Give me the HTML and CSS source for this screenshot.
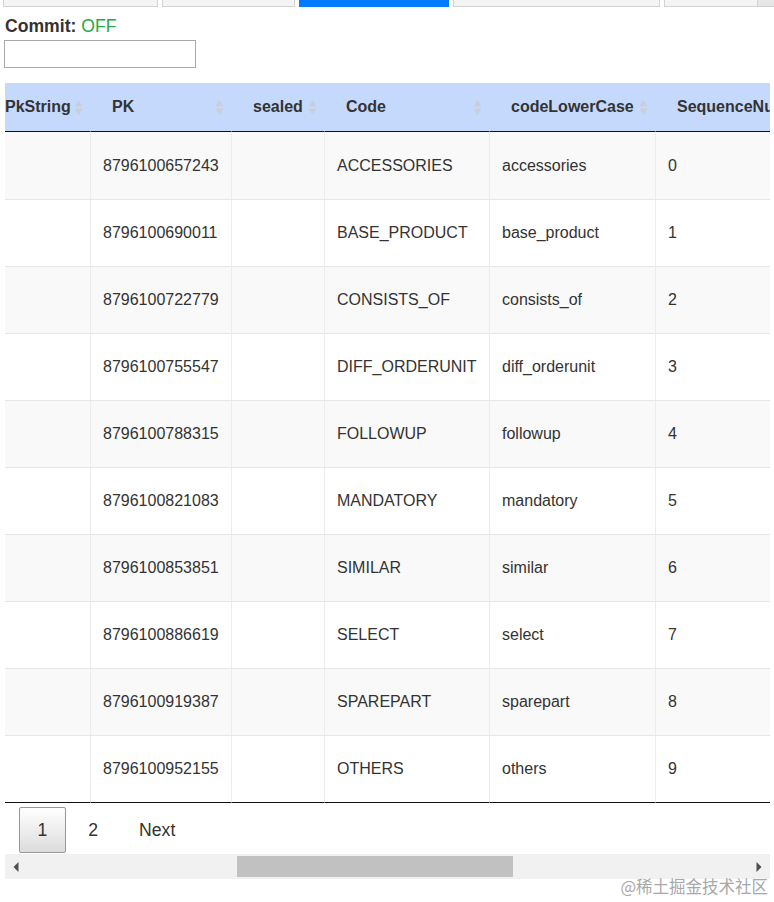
FILE: index.html
```html
<!DOCTYPE html>
<html>
<head>
<meta charset="utf-8">
<link rel="stylesheet" href="styles.css">
</head>
<body>
<div class="tabs">
  <div class="tab t1"></div>
  <div class="tab t2"></div>
  <div class="tab active t3"></div>
  <div class="tab t4"></div>
  <div class="tab t5"></div>
  <div class="tab-end"></div>
</div>
<div class="page">
  <div class="commit"><b>Commit:</b> <span class="off">OFF</span></div>
  <input class="search" type="text">
  <div class="grid">
    <div class="clip">
      <table class="data">
        <thead>
          <tr>
            <th class="c0"><div class="th-in"><span>PkString</span><svg class="sort" width="9" height="17" viewBox="0 0 9 17"><polygon points="0.5,7.5 4.5,1 8.5,7.5"/><polygon points="0.5,9.5 8.5,9.5 4.5,16"/></svg></div></th>
            <th class="c1"><div class="th-in"><span>PK</span><svg class="sort" width="9" height="17" viewBox="0 0 9 17"><polygon points="0.5,7.5 4.5,1 8.5,7.5"/><polygon points="0.5,9.5 8.5,9.5 4.5,16"/></svg></div></th>
            <th class="c2"><div class="th-in"><span>sealed</span><svg class="sort" width="9" height="17" viewBox="0 0 9 17"><polygon points="0.5,7.5 4.5,1 8.5,7.5"/><polygon points="0.5,9.5 8.5,9.5 4.5,16"/></svg></div></th>
            <th class="c3"><div class="th-in"><span>Code</span><svg class="sort" width="9" height="17" viewBox="0 0 9 17"><polygon points="0.5,7.5 4.5,1 8.5,7.5"/><polygon points="0.5,9.5 8.5,9.5 4.5,16"/></svg></div></th>
            <th class="c4"><div class="th-in"><span>codeLowerCase</span><svg class="sort" width="9" height="17" viewBox="0 0 9 17"><polygon points="0.5,7.5 4.5,1 8.5,7.5"/><polygon points="0.5,9.5 8.5,9.5 4.5,16"/></svg></div></th>
            <th class="c5"><div class="th-in"><span>SequenceNu</span></div></th>
          </tr>
        </thead>
        <tbody>
          <tr><td></td><td>8796100657243</td><td></td><td>ACCESSORIES</td><td>accessories</td><td>0</td></tr>
          <tr><td></td><td>8796100690011</td><td></td><td>BASE_PRODUCT</td><td>base_product</td><td>1</td></tr>
          <tr><td></td><td>8796100722779</td><td></td><td>CONSISTS_OF</td><td>consists_of</td><td>2</td></tr>
          <tr><td></td><td>8796100755547</td><td></td><td>DIFF_ORDERUNIT</td><td>diff_orderunit</td><td>3</td></tr>
          <tr><td></td><td>8796100788315</td><td></td><td>FOLLOWUP</td><td>followup</td><td>4</td></tr>
          <tr><td></td><td>8796100821083</td><td></td><td>MANDATORY</td><td>mandatory</td><td>5</td></tr>
          <tr><td></td><td>8796100853851</td><td></td><td>SIMILAR</td><td>similar</td><td>6</td></tr>
          <tr><td></td><td>8796100886619</td><td></td><td>SELECT</td><td>select</td><td>7</td></tr>
          <tr><td></td><td>8796100919387</td><td></td><td>SPAREPART</td><td>sparepart</td><td>8</td></tr>
          <tr><td></td><td>8796100952155</td><td></td><td>OTHERS</td><td>others</td><td>9</td></tr>
        </tbody>
      </table>
    </div>
    <div class="pager">
      <span class="pbtn current">1</span>
      <span class="pbtn">2</span>
      <span class="pbtn">Next</span>
    </div>
    <div class="hscroll">
      <div class="arrow-box"><svg width="6" height="10" viewBox="0 0 6 10"><polygon points="5.5,0 5.5,10 0.5,5" fill="#505050"/></svg></div>
      <div class="track"><div class="thumb"></div></div>
      <div class="arrow-box"><svg width="6" height="10" viewBox="0 0 6 10"><polygon points="0.5,0 0.5,10 5.5,5" fill="#505050"/></svg></div>
    </div>
  </div>
</div>
<div class="watermark">@稀土掘金技术社区</div>
</body>
</html>
```
FILE: styles.css
```css
html, body {
  margin: 0;
  padding: 0;
  background: #fff;
}
body {
  font-family: "Liberation Sans", Arial, sans-serif;
  color: #333;
  width: 774px;
  height: 902px;
  overflow: hidden;
  position: relative;
}
.tabs {
  display: flex;
  height: 7px;
  padding-left: 3px;
}
.tab {
  box-sizing: border-box;
  height: 7px;
  background: #f4f4f4;
  border: 1px solid #d2d2d2;
  border-top: none;
  margin-right: 4px;
}
.t1 { width: 155px; }
.t2 { width: 133px; }
.t3 { width: 151px; margin-right: 4px; }
.t4 { width: 207px; }
.t5 { width: 94px; margin-right: 0; }
.tab.active {
  background: #007bff;
  border-color: #007bff;
}
.tab-end {
  width: 16px;
  height: 7px;
  box-sizing: border-box;
  background: #e6e6e6;
  border-bottom: 1px solid #d2d2d2;
}
.page {
  padding-left: 5px;
}
.commit {
  margin-top: 9px;
  font-size: 17.6px;
  line-height: 20px;
  color: #333;
  padding-left: 0;
}
.commit b { font-weight: bold; }
.off { color: #28a745; }
.search {
  display: block;
  box-sizing: border-box;
  margin: 4px 0 0 -1px;
  width: 192px;
  height: 28px;
  border: 1px solid #a9a9a9;
  padding: 0;
  outline: none;
  background: #fff;
}
.grid {
  width: 765px;
  margin-top: 15px;
}
.clip {
  width: 765px;
  overflow: hidden;
}
.data {
  table-layout: fixed;
  border-collapse: separate;
  border-spacing: 0;
  width: 850px;
  font-size: 16px;
}
.data th, .data td {
  box-sizing: border-box;
}
.c0 { width: 85px; }
.c1 { width: 141px; }
.c2 { width: 93px; }
.c3 { width: 165px; }
.c4 { width: 166px; }
.c5 { width: 200px; }
.data thead th {
  background: #c5d9fd;
  height: 49px;
  padding: 0 7px 0 21px;
  border-bottom: 1px solid #111;
  border-left: 1px solid transparent;
  font-weight: bold;
  text-align: left;
  white-space: nowrap;
  overflow: hidden;
  color: #333;
}
.data thead th.c0 {
  padding-left: 0;
  border-left: none;
}
.th-in {
  display: flex;
  align-items: center;
  justify-content: space-between;
}
.sort {
  flex: none;
  fill: #c9cfda;
}
.data tbody td {
  height: 67px;
  padding: 0 6px 0 12px;
  border-top: 1px solid #e6e6e6;
  border-left: 1px solid #ececec;
  white-space: nowrap;
  overflow: hidden;
  color: #333;
  vertical-align: middle;
}
.data tbody td:first-child {
  border-left: none;
}
.data tbody tr:nth-child(odd) td {
  background: #f9f9f9;
}
.data tbody tr:nth-child(even) td {
  background: #fff;
}
.data tbody tr:first-child td {
  border-top-color: #f9f9f9;
}
.data tbody tr:last-child td {
  height: 68px;
  border-bottom: 1px solid #111;
}
.pager {
  display: flex;
  padding: 4px 0 1px 14px;
}
.pbtn {
  box-sizing: border-box;
  height: 46px;
  padding: 0 17.5px;
  margin-right: 4px;
  border: 1px solid transparent;
  border-radius: 2px;
  display: flex;
  align-items: center;
  font-size: 17.6px;
  color: #333;
}
.pbtn.current {
  border-color: #979797;
  background: linear-gradient(to bottom, #ffffff 0%, #dcdcdc 100%);
}
.hscroll {
  display: flex;
  height: 25px;
  background: #f1f1f1;
}
.arrow-box {
  width: 22px;
  flex: none;
  display: flex;
  align-items: center;
  justify-content: center;
}
.track {
  flex: 1;
  display: flex;
  align-items: center;
}
.thumb {
  margin-left: 210px;
  width: 276px;
  height: 21px;
  background: #c1c1c1;
}
.watermark {
  position: absolute;
  right: 6px;
  top: 876px;
  font-family: "Noto Sans CJK SC", sans-serif;
  font-size: 16.5px;
  line-height: 20px;
  color: #a8a8a8;
}
```
